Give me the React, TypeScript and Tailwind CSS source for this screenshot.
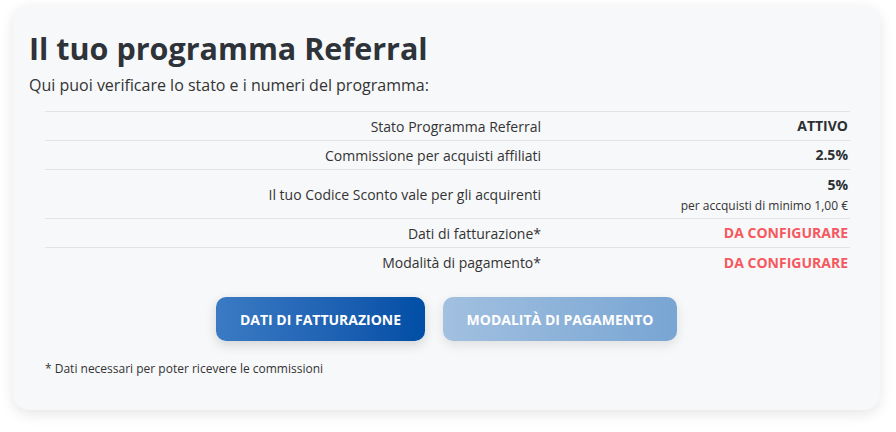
import React from "react";

const rows: { label: string; value: string; sub?: string; red?: boolean }[] = [
  { label: "Stato Programma Referral", value: "ATTIVO" },
  { label: "Commissione per acquisti affiliati", value: "2.5%" },
  { label: "Il tuo Codice Sconto vale per gli acquirenti", value: "5%", sub: "per accquisti di minimo 1,00 €" },
  { label: "Dati di fatturazione*", value: "DA CONFIGURARE", red: true },
  { label: "Modalità di pagamento*", value: "DA CONFIGURARE", red: true },
];

export default function App() {
  return (
    <div className="w-[896px] h-[432px] bg-white pt-[5px] pl-[13px]" style={{ fontFamily: '"Open Sans", sans-serif' }}>
      <div className="w-[867px] h-[405px] rounded-[16px] bg-[#f7f8fa] shadow-[0_4px_14px_rgba(0,0,0,0.10)] px-4 pt-[24px] text-[#2b2f33]">
        <h1 className="text-[30.5px] leading-[38px] font-bold text-[#2d3338]">Il tuo programma Referral</h1>
        <p className="mt-[7px] text-[16px] leading-[22px] text-[#333]">Qui puoi verificare lo stato e i numeri del programma:</p>
        <div className="mt-[15px] ml-4 w-[805px] border-t border-[#e1e3e6]">
          {rows.map((r, i) => (
            <div key={i} className={`flex items-center ${i < rows.length - 1 ? "border-b border-[#e1e3e6]" : ""} ${r.sub ? "h-[49px]" : "h-[29px]"}`}>
              <div className="w-[496px] text-right text-[14px] text-[#333]">{r.label}</div>
              <div className="flex-1 text-right pr-[2px]">
                <div className={`text-[14px] leading-[20px] font-bold ${r.red ? "text-[#f5585e]" : "text-[#2b2f33]"}`}>{r.value}</div>
                {r.sub && <div className="text-[12px] leading-[16px] mt-[3px] text-[#333]">{r.sub}</div>}
              </div>
            </div>
          ))}
        </div>
        <div className="mt-[20px] flex justify-center gap-[18px]">
          <button className="w-[209px] h-[44px] rounded-[10px] bg-gradient-to-r from-[#3b7bc4] to-[#004ea6] text-white text-[14px] font-bold shadow-[0_4px_12px_rgba(0,0,0,0.15)]">
            DATI DI FATTURAZIONE
          </button>
          <button className="w-[234px] h-[44px] rounded-[10px] bg-gradient-to-r from-[#a2c0e0] to-[#78a5d3] text-white text-[14px] font-bold shadow-[0_4px_12px_rgba(0,0,0,0.10)]">
            MODALITÀ DI PAGAMENTO
          </button>
        </div>
        <p className="mt-[19px] ml-4 text-[12px] leading-[18px] text-[#333]">* Dati necessari per poter ricevere le commissioni</p>
      </div>
    </div>
  );
}
